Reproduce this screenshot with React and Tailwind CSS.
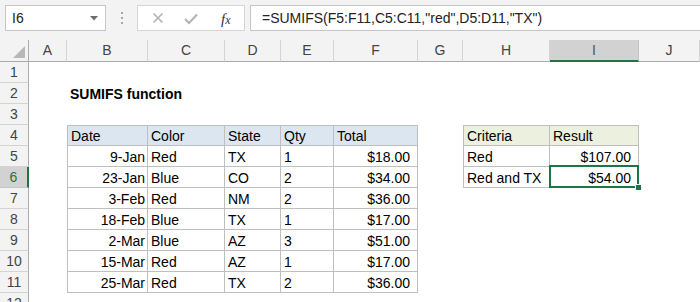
import React from "react";

const COLS = ["A", "B", "C", "D", "E", "F", "G", "H", "I", "J"];

const DATA = [
  ["9-Jan", "Red", "TX", "1", "$18.00"],
  ["23-Jan", "Blue", "CO", "2", "$34.00"],
  ["3-Feb", "Red", "NM", "2", "$36.00"],
  ["18-Feb", "Blue", "TX", "1", "$17.00"],
  ["2-Mar", "Blue", "AZ", "3", "$51.00"],
  ["15-Mar", "Red", "AZ", "1", "$17.00"],
  ["25-Mar", "Red", "TX", "2", "$36.00"],
];

function getCell(r, c) {
  const cell = { text: "", align: "left", bold: false, border: false, bl: false, bt: false, bg: "", money: false, sel: false };
  if (r === 2 && c === 1) {
    cell.text = "SUMIFS function";
    cell.bold = true;
    return cell;
  }
  if (r >= 4 && r <= 11 && c >= 1 && c <= 5) {
    cell.border = true;
    cell.bl = c === 1;
    cell.bt = r === 4;
    if (r === 4) {
      cell.text = ["Date", "Color", "State", "Qty", "Total"][c - 1];
      cell.bg = "blue";
    } else {
      cell.text = DATA[r - 5][c - 1];
      if (c === 1) cell.align = "right";
      if (c === 5) {
        cell.align = "right";
        cell.money = true;
      }
    }
    return cell;
  }
  if (r >= 4 && r <= 6 && c >= 7 && c <= 8) {
    cell.border = true;
    cell.bl = c === 7;
    cell.bt = r === 4;
    if (r === 4) {
      cell.text = c === 7 ? "Criteria" : "Result";
      cell.bg = "green";
    } else if (r === 5) {
      cell.text = c === 7 ? "Red" : "$107.00";
    } else {
      cell.text = c === 7 ? "Red and TX" : "$54.00";
      if (c === 8) cell.sel = true;
    }
    if (c === 8 && r > 4) {
      cell.align = "right";
      cell.money = true;
    }
    return cell;
  }
  return cell;
}

function Cell({ r, c }) {
  const d = getCell(r, c);
  const borderCls = d.border
    ? `border-r border-b border-[#bfbfbf] ${d.bl ? "border-l" : ""} ${d.bt ? "border-t" : ""}`
    : "border-b border-transparent";
  const bgCls = d.bg === "blue" ? "bg-[#dce6f1]" : d.bg === "green" ? "bg-[#ebf1de]" : d.border ? "bg-white" : "bg-transparent";
  const alignCls = d.align === "right" ? "justify-end" : "justify-start";
  const padCls = d.align === "right" ? (d.money ? "pr-[7px]" : "pr-[2px]") : "pl-[3px]";
  return (
    <div className={`relative h-[21px] flex items-end whitespace-nowrap pb-[1px] ${borderCls} ${bgCls} ${alignCls} ${padCls}`}>
      <span className={`leading-[16px] text-[14px] text-black ${d.bold ? "font-bold" : ""}`}>{d.text}</span>
      {d.sel && (
        <>
          <div className="absolute z-10 -left-[1px] -top-[2px] -right-[1px] -bottom-[1px] border-2 border-[#217346] pointer-events-none" />
          <div className="absolute z-10 -right-[4px] -bottom-[4px] w-[7px] h-[7px] bg-[#217346] border border-white" />
        </>
      )}
    </div>
  );
}

export default function App() {
  const rows = Array.from({ length: 12 }, (_, i) => i + 1);
  return (
    <div
      className="w-[700px] h-[302px] overflow-hidden bg-white text-[14px]"
      style={{ fontFamily: '"Liberation Sans", Arial, sans-serif' }}
    >
      {/* Toolbar */}
      <div className="h-[40px] bg-[#f3f3f3] flex items-start pt-[5px]">
        <div className="ml-[5px] w-[101px] h-[26px] bg-white border border-[#c6c6c6] flex items-center justify-between pl-[6px] pr-[6px]">
          <span className="text-[14px] text-[#222]">I6</span>
          <svg width="8" height="5" viewBox="0 0 8 5" className="mr-[1px]">
            <path d="M0 0 L8 0 L4 4.5 Z" fill="#6d6d6d" />
          </svg>
        </div>
        <div className="w-[31px] h-[26px] flex flex-col items-center justify-center gap-[3px]">
          <div className="w-[2px] h-[2px] bg-[#a8a8a8]" />
          <div className="w-[2px] h-[2px] bg-[#a8a8a8]" />
          <div className="w-[2px] h-[2px] bg-[#a8a8a8]" />
        </div>
        <div className="w-[108px] h-[26px] bg-white border border-[#d6d6d6] flex items-center relative">
          <svg width="12" height="12" viewBox="0 0 12 12" className="absolute left-[14px] top-[6px]">
            <path d="M1.5 1.5 L10.5 10.5 M10.5 1.5 L1.5 10.5" stroke="#b3b3b3" strokeWidth="1.6" />
          </svg>
          <svg width="14" height="12" viewBox="0 0 14 12" className="absolute left-[46px] top-[7px]">
            <path d="M1 6 L5 10 L13 1.5" stroke="#b3b3b3" strokeWidth="2" fill="none" />
          </svg>
          <span
            className="absolute left-[83px] top-[2px] text-[15px] italic text-[#333]"
            style={{ fontFamily: '"Liberation Serif", "Times New Roman", serif' }}
          >
            f<span className="text-[12px]">x</span>
          </span>
        </div>
        <div className="ml-[5px] flex-1 h-[26px] bg-white border border-[#c6c6c6] border-r-0 flex items-center pl-[11px]">
          <span className="text-[14px] text-[#222] whitespace-nowrap">=SUMIFS(F5:F11,C5:C11,"red",D5:D11,"TX")</span>
        </div>
      </div>

      {/* Sheet grid */}
      <div className="grid grid-cols-[29px_38px_81px_77px_56px_53px_84px_45px_87px_89px_61px]">
        <div className="h-[22px] bg-[#f3f3f3] border-r border-b border-[#ababab] relative">
          <svg width="12" height="12" viewBox="0 0 12 12" className="absolute right-[3px] bottom-[3px]">
            <path d="M12 0 L12 12 L0 12 Z" fill="#b7b7b7" />
          </svg>
        </div>
        {COLS.map((l, i) =>
          i === 8 ? (
            <div key={l} className="h-[22px] bg-[#d2d2d2] border-r border-[#c6c6c6] border-b-2 border-b-[#217346] flex items-center justify-center text-[14px] text-[#555]">
              {l}
            </div>
          ) : (
            <div key={l} className="h-[22px] bg-[#f3f3f3] border-r border-r-[#d4d4d4] border-b border-b-[#ababab] flex items-center justify-center text-[14px] text-[#444]">
              {l}
            </div>
          )
        )}

        {rows.map((r) => (
          <React.Fragment key={r}>
            {r === 6 ? (
              <div className="h-[21px] bg-[#d2d2d2] border-r-2 border-r-[#217346] border-b border-b-[#c6c6c6] flex items-center justify-center text-[14px] text-[#217346]">
                {r}
              </div>
            ) : (
              <div className="h-[21px] bg-[#f3f3f3] border-r border-r-[#ababab] border-b border-b-[#d4d4d4] flex items-center justify-center text-[14px] text-[#444]">
                {r}
              </div>
            )}
            {COLS.map((l, c) => (
              <Cell key={l} r={r} c={c} />
            ))}
          </React.Fragment>
        ))}
      </div>
    </div>
  );
}
